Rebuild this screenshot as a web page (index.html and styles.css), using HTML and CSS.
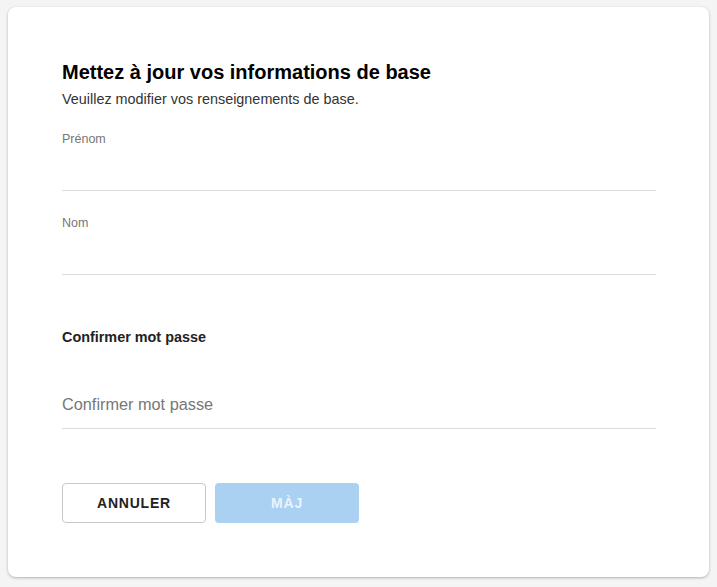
FILE: index.html
```html
<!DOCTYPE html>
<html lang="fr">
<head>
<meta charset="utf-8">
<link rel="stylesheet" href="styles.css">
</head>
<body>
<div class="card">
  <h1 class="title">Mettez à jour vos informations de base</h1>
  <p class="subtitle">Veuillez modifier vos renseignements de base.</p>
  <div class="field">
    <label class="label">Prénom</label>
    <div class="input"></div>
  </div>
  <div class="field">
    <label class="label">Nom</label>
    <div class="input"></div>
  </div>
  <div class="field-strong">
    <label class="label-strong">Confirmer mot passe</label>
    <div class="input-ph">Confirmer mot passe</div>
  </div>
  <div class="actions">
    <button class="btn btn-outline">ANNULER</button>
    <button class="btn btn-primary">MÀJ</button>
  </div>
</div>
</body>
</html>
```

FILE: styles.css
```css
* { box-sizing: border-box; }
html, body { margin: 0; padding: 0; }
body {
  background: #f4f4f4;
  font-family: "Liberation Sans", Arial, sans-serif;
  width: 717px;
  height: 587px;
  padding: 7px 8px 0 8px;
}
.card {
  background: #fff;
  width: 701px;
  height: 570px;
  border-radius: 8px;
  box-shadow: 0 1px 3px rgba(0,0,0,0.28);
  padding: 55px 53px 0 54px;
}
.title {
  margin: 0;
  font-size: 20px;
  line-height: 20px;
  font-weight: bold;
  color: #000;
}
.subtitle {
  margin: 10px 0 0 0;
  font-size: 14.4px;
  line-height: 15px;
  color: #333;
}
.field { margin-top: 25px; }
.field + .field { margin-top: 25px; }
.label {
  display: block;
  font-size: 12.5px;
  line-height: 14px;
  color: #777;
}
.input {
  height: 45px;
  border-bottom: 1px solid #dcdcdc;
}
.field-strong { margin-top: 54px; }
.label-strong {
  display: block;
  font-size: 14.4px;
  line-height: 17px;
  font-weight: bold;
  color: #222;
}
.input-ph {
  margin-top: 49px;
  font-size: 16.3px;
  line-height: 19px;
  color: #777;
  padding-bottom: 14px;
  border-bottom: 1px solid #dcdcdc;
}
.actions {
  display: flex;
  gap: 9px;
  margin-top: 54px;
}
.btn {
  width: 144px;
  height: 40px;
  border-radius: 4px;
  font-family: "Liberation Sans", Arial, sans-serif;
  font-size: 14px;
  font-weight: bold;
  letter-spacing: 0.8px;
  padding: 0;
}
.btn-outline {
  background: #fff;
  border: 1px solid #c8c8c8;
  color: #222;
}
.btn-primary {
  background: #aad0f2;
  border: none;
  color: #eaf4fd;
}
```
